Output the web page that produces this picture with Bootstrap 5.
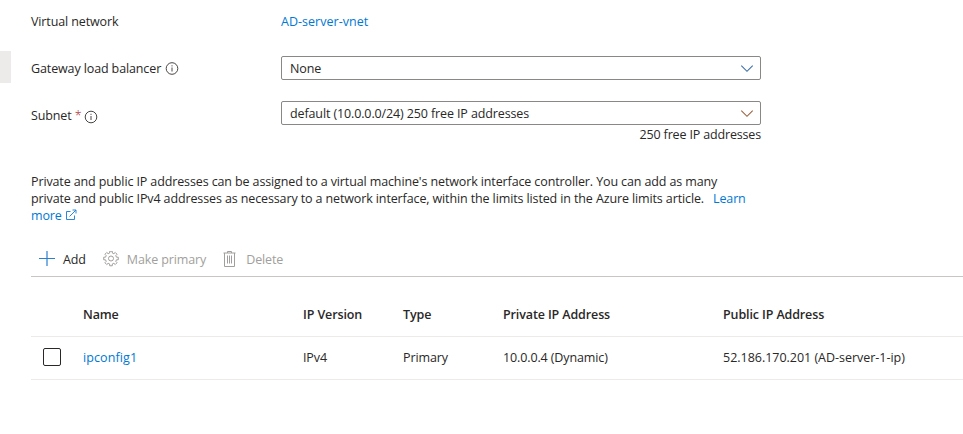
<!DOCTYPE html>
<html lang="en">
<head>
<meta charset="utf-8">
<title>IP configurations</title>
<link href="https://cdn.jsdelivr.net/npm/bootstrap@5.3.0/dist/css/bootstrap.min.css" rel="stylesheet">
<style>
body{font-family:"Open Sans","Noto Sans",sans-serif;font-size:12.5px;line-height:17px;letter-spacing:-.12px;color:#292827;background:#fff;overflow:hidden}
svg{display:block;fill:none;flex:none}
a{color:#0078d4;text-decoration:none}
.rail{width:11px;height:32px;margin-top:51px;background:#edebe9}
.pane{margin-left:20px}
.field-label{width:250px}
.field-net{height:24px;margin-top:9px}
.field-net a{letter-spacing:.03px}
.field-gw{height:24px;margin-top:23px}
.field-sub{height:24px;margin-top:21px}
.field-sub .field-label{padding-top:5px}
.field-sub .field-label svg{margin:2px 0 0 3px}
.picker{width:480px;height:24px;border:1px solid #8a8886;border-radius:2px;padding:0 6px 0 8px;color:#292827}
.req{color:#a4262c;font-weight:300}
.hint{width:730px;margin-top:1px;letter-spacing:-.16px}
.about{width:725px;margin-top:30px}
.learn{margin-left:9px}
.ext{margin:0 0 1px 3px}
.tools{height:35px;margin-top:18px;border-bottom:1px solid #c8c6c4}
.gap-icon{margin-left:17px}
.label-del{margin-left:9px}
.off{color:#a19f9d}
.grid-row{display:grid;grid-template-columns:52px 220px 100px 100px 220px 1fr;align-items:center;height:43px;border-bottom:1px solid #edebe9}
.grid-row a{letter-spacing:.1px}
.grid-row > a,.grid-row > span{padding-bottom:1px}
.grid-head{font-weight:600;height:44px;margin-top:16px}
.grid-head > span{padding-bottom:0}
.ip-public{letter-spacing:-.02px}
.form-check-input.pick{width:18px;height:18px;margin:0 0 2px 12px;border:1px solid #292827;border-radius:2px}
</style>
</head>
<body>
<div class="d-flex align-items-start">
<div class="rail flex-shrink-0"></div>
<main class="pane flex-grow-1">
  <div class="field-net d-flex align-items-center">
    <div class="field-label">Virtual network</div><a href="#">AD-server-vnet</a>
  </div>
  <div class="field-gw d-flex align-items-center">
    <div class="field-label d-flex align-items-center"><span>Gateway load balancer</span>
      <svg class="ms-1" width="14" height="14" viewBox="0 0 14 14" stroke="#484644"><circle cx="7" cy="7.500" r="5.800"/><path d="M7 6.500v4M7 4.300v1.100"/></svg></div>
    <div class="picker d-flex align-items-center justify-content-between"><span>None</span>
      <svg width="14" height="14" viewBox="0 0 14 14" stroke="#3d6fa8" stroke-width="1.1"><path d="M1.300 4.700L7 10.300l5.700-5.600"/></svg></div>
  </div>
  <div class="field-sub d-flex align-items-center">
    <div class="field-label d-flex align-items-center"><span>Subnet <span class="req">*</span></span>
      <svg width="14" height="14" viewBox="0 0 14 14" stroke="#484644"><circle cx="7" cy="7" r="5.800"/><path d="M7 6v4M7 3.800v1.100"/></svg></div>
    <div class="picker d-flex align-items-center justify-content-between"><span>default (10.0.0.0/24) 250 free IP addresses</span>
      <svg width="14" height="14" viewBox="0 0 14 14" stroke="#9a6440" stroke-width="1.1"><path d="M1.300 4.700L7 10.300l5.700-5.600"/></svg></div>
  </div>
  <div class="hint text-end">250 free IP addresses</div>
  <div class="about">
    <div class="text-nowrap">Private and public IP addresses can be assigned to a virtual machine's network interface controller. You can add as many</div>
    <div class="text-nowrap">private and public IPv4 addresses as necessary to a network interface, within the limits listed in the Azure limits article.<a class="learn" href="#">Learn</a></div>
    <a class="d-flex align-items-center" href="#">more
      <svg class="ext" width="12" height="12" viewBox="0 0 12 12" stroke="#2b88d8"><path d="M5.500 2.500H1.500v8h8V6.500M7.500 1h3.500v3.500M11 1L4.500 7.500"/></svg></a>
  </div>
  <div class="tools d-flex align-items-center">
    <svg class="ms-2" width="16" height="16" viewBox="0 0 16 16" stroke="#2b7fd0" stroke-width="1.2"><path d="M8 0v15M0 7.500h16"/></svg>
    <span class="ms-2">Add</span>
    <svg class="gap-icon" width="16" height="16" viewBox="-8 -8 16 16" stroke="#a19f9d"><path transform="translate(0 -.5)" d="M5.430 -1.350L7.290 -1.280V1.280L5.430 1.350L4.800 2.880L6.060 4.240L4.240 6.060L2.880 4.800L1.350 5.430L1.280 7.290H-1.280L-1.350 5.430L-2.880 4.800L-4.240 6.060L-6.060 4.240L-4.800 2.880L-5.430 1.350L-7.290 1.280V-1.280L-5.430 -1.350L-4.800 -2.880L-6.060 -4.240L-4.240 -6.060L-2.880 -4.800L-1.350 -5.430L-1.280 -7.290H1.280L1.350 -5.430L2.880 -4.800L4.240 -6.060L6.060 -4.240L4.800 -2.880Z"/><circle cy="-.5" r="2.500"/></svg>
    <span class="off ms-2">Make primary</span>
    <svg class="gap-icon" width="14" height="16" viewBox="0 0 14 16" stroke="#a19f9d"><path d="M.5 2h12M4.500 2V.5h4V2M1.500 2v13.500h10V2M4.500 4.500v8M6.500 4.500v8M8.500 4.500v8"/></svg>
    <span class="off label-del">Delete</span>
  </div>
  <div class="grid-row grid-head"><span></span><span>Name</span><span>IP Version</span><span>Type</span><span>Private IP Address</span><span>Public IP Address</span></div>
  <div class="grid-row"><input class="form-check-input pick" type="checkbox" aria-label="Select ipconfig1"><a href="#">ipconfig1</a><span>IPv4</span><span>Primary</span><span>10.0.0.4 (Dynamic)</span><span class="ip-public">52.186.170.201 (AD-server-1-ip)</span></div>
</main>
</div>
<script src="https://cdn.jsdelivr.net/npm/bootstrap@5.3.0/dist/js/bootstrap.bundle.min.js"></script>
</body>
</html>
